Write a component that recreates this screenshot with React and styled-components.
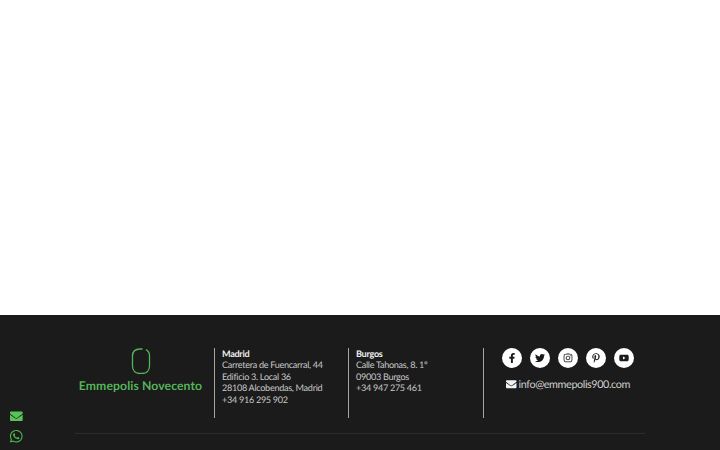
import React from 'react';
import styled, { createGlobalStyle } from 'styled-components';
import { FaFacebookF, FaTwitter, FaInstagram, FaPinterestP, FaYoutube, FaEnvelope, FaWhatsapp } from 'react-icons/fa';

const GlobalStyle = createGlobalStyle`
  html, body {
    margin: 0;
    padding: 0;
    background: #fff;
  }

  body {
    font-family: Lato, "Open Sans", sans-serif;
    text-rendering: geometricPrecision;
    overflow: hidden;
  }
`;

const Page = styled.div`
  height: 450px;
  display: flex;
  flex-direction: column;
  overflow: hidden;
`;

const Blank = styled.div`
  height: 315px;
  flex: none;
  background: #fff;
`;

const Footer = styled.footer`
  flex: 1;
  background: #1b1b1b;
  display: flex;
  flex-direction: column;
  align-items: center;
  padding-top: 33px;
`;

const Columns = styled.div`
  width: 570px;
  height: 70px;
  display: grid;
  grid-template-columns: 139px 134px 135px 1fr;
`;

const LogoColumn = styled.div`
  display: flex;
  flex-direction: column;
  align-items: center;
  padding-right: 8px;
  gap: 5px;
`;

const LogoMark = styled.svg`
  width: 20px;
  height: 26px;
  display: block;
`;

const LogoName = styled.div`
  color: #55b45a;
  font-size: 12.2px;
  line-height: 14px;
  font-weight: 700;
  letter-spacing: 0.1px;
  white-space: nowrap;
`;

const Office = styled.address`
  border-left: 1px solid #a5a5a5;
  padding-left: 7px;
  color: #c8c8c8;
  font-style: normal;
  font-size: 9.1px;
  line-height: 11.4px;
  letter-spacing: -0.3px;
  white-space: nowrap;
`;

const City = styled.strong`
  display: block;
  color: #efefef;
  font-weight: 700;
`;

const Contact = styled.div`
  border-left: 1px solid #a5a5a5;
  display: flex;
  flex-direction: column;
  align-items: center;
  padding-left: 7px;
  gap: 10px;
`;

const Socials = styled.div`
  display: flex;
  gap: 8px;
`;

const Social = styled.a`
  width: 20px;
  height: 20px;
  border-radius: 50%;
  background: #fff;
  color: #1b1b1b;
  font-size: 10px;
  display: flex;
  align-items: center;
  justify-content: center;
`;

const Email = styled.a`
  display: flex;
  align-items: center;
  gap: 2px;
  color: #cfcfcf;
  font-size: 10.8px;
  line-height: 13px;
  letter-spacing: -0.4px;
  white-space: nowrap;
`;

const EmailIcon = styled(FaEnvelope)`
  color: #f2f2f2;
  font-size: 10.5px;
`;

const Rule = styled.hr`
  width: 570px;
  margin: 15px 0 0;
  border: 0;
  border-top: 1px solid #2c2c2c;
`;

const Floating = styled.div`
  position: fixed;
  left: 9px;
  bottom: 7px;
  display: flex;
  flex-direction: column;
  gap: 6px;
  color: #4fb84f;
`;

const FloatingMail = styled(FaEnvelope)`
  display: block;
  font-size: 12.7px;
  margin-left: 1px;
  color: #58c458;
`;

const FloatingWhatsapp = styled(FaWhatsapp)`
  display: block;
  font-size: 14.5px;
`;

const offices = [
  {
    city: 'Madrid',
    lines: ['Carretera de Fuencarral, 44', 'Edificio 3. Local 36', '28108 Alcobendas, Madrid', '+34 916 295 902']
  },
  {
    city: 'Burgos',
    lines: ['Calle Tahonas, 8. 1º', '09003 Burgos', '+34 947 275 461']
  }
];

const socials = [FaFacebookF, FaTwitter, FaInstagram, FaPinterestP, FaYoutube];

const App = () => (
  <Page>
    <GlobalStyle />
    <Blank />
    <Footer>
      <Columns>
        <LogoColumn>
          <LogoMark viewBox="0 0 20 26" fill="none" stroke="#55b45a" strokeWidth="1.3">
            <path d="M11.5 1H9C4.5 1 1.5 3.5 1.5 8v10c0 4.5 3 7.5 7.5 7.5h2c4.5 0 7.5-3 7.5-7.5V8c0-3-1-5-3.5-6.3" />
          </LogoMark>
          <LogoName>Emmepolis Novecento</LogoName>
        </LogoColumn>
        {offices.map(office => (
          <Office key={office.city}>
            <City>{office.city}</City>
            {office.lines.map(line => (
              <div key={line}>{line}</div>
            ))}
          </Office>
        ))}
        <Contact>
          <Socials>
            {socials.map((Icon, i) => (
              <Social key={i}>
                <Icon />
              </Social>
            ))}
          </Socials>
          <Email>
            <EmailIcon />
            info@emmepolis900.com
          </Email>
        </Contact>
      </Columns>
      <Rule />
    </Footer>
    <Floating>
      <FloatingMail />
      <FloatingWhatsapp />
    </Floating>
  </Page>
);

export default App;
